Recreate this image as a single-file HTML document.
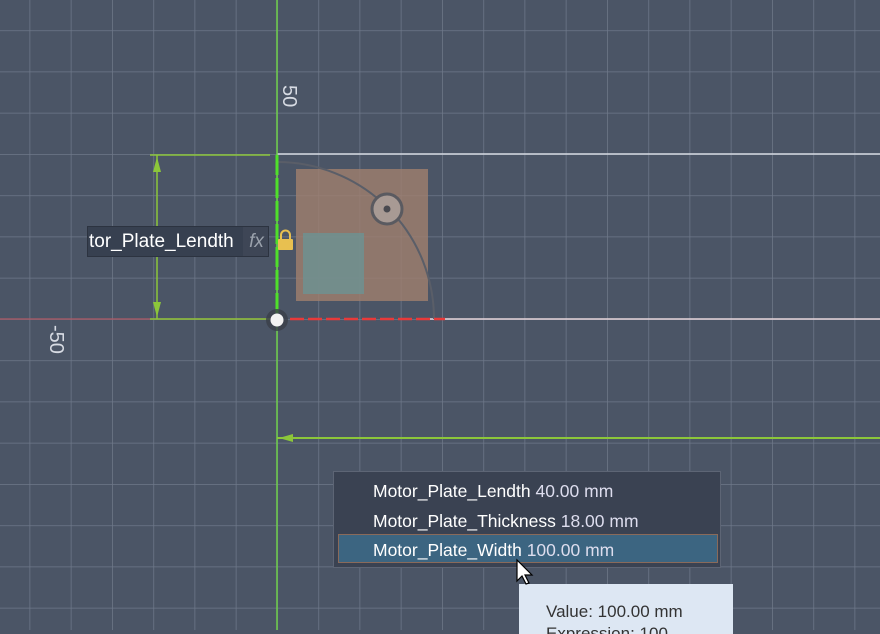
<!DOCTYPE html><html><head><style>body{margin:0;width:880px;height:630px;overflow:hidden;background:#4b5566;font-family:"Liberation Sans",sans-serif}</style></head><body>
<svg width="880" height="630" style="position:absolute;left:0;top:0">
<defs><pattern id="g" x="277" y="319" width="41.25" height="41.25" patternUnits="userSpaceOnUse"><path d="M0 0H41.25M0 0V41.25" stroke="#6e7889" stroke-width="1.5" fill="none"/></pattern></defs>
<rect width="880" height="630" fill="url(#g)"/>
<line x1="0" y1="319" x2="277" y2="319" stroke="#b05a66" stroke-width="1.2"/>
<line x1="430" y1="319" x2="880" y2="319" stroke="#e8d6dc" stroke-width="1.5"/>
<line x1="277" y1="154" x2="880" y2="154" stroke="#d7dbe3" stroke-width="1.5"/>
<rect x="296" y="169" width="132" height="132" fill="#a0806e" opacity=".8"/>
<rect x="303" y="233" width="61" height="61" fill="#6f9090" opacity=".85"/>
<path d="M277 162 A157 157 0 0 1 434 319" stroke="#5a5e68" stroke-width="2" fill="none"/>
<circle cx="387" cy="209" r="15" fill="#a89a94" stroke="#5a5a60" stroke-width="3"/>
<circle cx="387" cy="209" r="3.5" fill="#4a4a50"/>
<line x1="290" y1="319" x2="445" y2="319" stroke="#e83a3a" stroke-width="2.5" stroke-dasharray="14 4"/>
<line x1="277" y1="0" x2="277" y2="630" stroke="#6fd04a" stroke-width="1.5"/>
<line x1="277" y1="155" x2="277" y2="319" stroke="#4fe02a" stroke-width="3" stroke-dasharray="20 3"/>
<line x1="150" y1="155" x2="270" y2="155" stroke="#8cc63a" stroke-width="1.5"/>
<line x1="150" y1="319" x2="270" y2="319" stroke="#8cc63a" stroke-width="1.5"/>
<line x1="157" y1="155" x2="157" y2="319" stroke="#8cc63a" stroke-width="1.5"/>
<path d="M157 157 L153 172 L161 172Z M157 317 L153 302 L161 302Z" fill="#8cc63a"/>
<line x1="277" y1="438" x2="880" y2="438" stroke="#8cc63a" stroke-width="2"/>
<path d="M279 438 L293 434 L293 442Z" fill="#8cc63a"/>
<circle cx="277" cy="320" r="11" fill="#3a3f48" opacity=".8"/>
<circle cx="277" cy="320" r="6.5" fill="#f2f2f2"/>
<rect x="278" y="239" width="15" height="11" rx="1" fill="#e8c050"/>
<path d="M281 239 V235 A4 4 0 0 1 290 235 V239" stroke="#e8c050" stroke-width="2" fill="none"/>
<text x="0" y="0" transform="translate(283 85) rotate(90)" fill="#d7dbe3" font-size="20">50</text>
<text x="0" y="0" transform="translate(50 325) rotate(90)" fill="#d7dbe3" font-size="20">-50</text>
</svg>
<div style="position:absolute;left:87px;top:226px;width:182px;height:31px;background:#374050;border:1px solid #2c3340;box-sizing:border-box;color:#fff;font-size:19px;line-height:29px;overflow:hidden"><span style="position:absolute;left:1px;white-space:nowrap">tor_Plate_Lendth</span><span style="position:absolute;left:155px;width:27px;top:0;bottom:0;background:#3e4656;color:#9aa1ac;font-style:italic;text-align:center">fx</span></div>
<div style="position:absolute;left:333px;top:471px;width:388px;height:97px;background:#3a4252;border:1px solid #5d6575;box-sizing:border-box;color:#fff;font-size:17.5px">
<div style="position:absolute;left:39px;top:9px;white-space:nowrap">Motor_Plate_Lendth <span style="color:#dde">40.00 mm</span></div>
<div style="position:absolute;left:39px;top:39px;white-space:nowrap">Motor_Plate_Thickness <span style="color:#dde">18.00 mm</span></div>
<div style="position:absolute;left:4px;top:62px;width:380px;height:29px;background:#3c6581;border:1px solid #8a6a5a;box-sizing:border-box"></div>
<div style="position:absolute;left:39px;top:68px;white-space:nowrap">Motor_Plate_Width <span style="color:#dde">100.00 mm</span></div>
</div>
<div style="position:absolute;left:519px;top:584px;width:214px;height:50px;background:#dde7f3;color:#333;font-size:17px;overflow:hidden"><div style="position:absolute;left:27px;top:18px">Value: 100.00 mm</div><div style="position:absolute;left:27px;top:40px">Expression: 100</div></div>
<svg width="30" height="30" style="position:absolute;left:514px;top:558px"><path d="M3 2 V23 L8 18 L12 26 L15 25 L11 17 L18 17Z" fill="#fff" stroke="#000" stroke-width="1.2"/></svg>
</body></html>
